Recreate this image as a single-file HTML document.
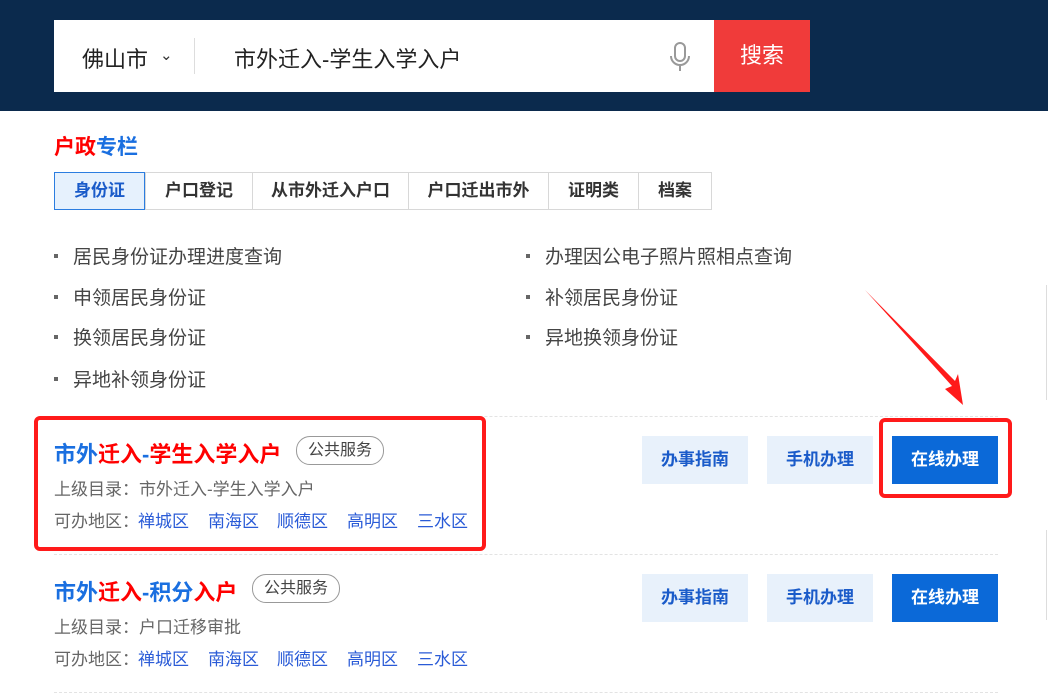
<!DOCTYPE html>
<html><head><meta charset="utf-8"><style>
*{margin:0;padding:0;box-sizing:border-box}
body{width:1048px;height:694px;overflow:hidden;background:#fff;font-family:"Liberation Sans","Noto Sans CJK SC",sans-serif;position:relative;color:#333}
.a{position:absolute;white-space:nowrap}
.hdr{left:0;top:0;width:1048px;height:111px;background:#0b2a4d}
.sb{left:54px;top:20px;width:660px;height:72px;background:#fff}
.btn{left:714px;top:20px;width:96px;height:72px;background:#f03b3a;color:#fff;font-size:22px;line-height:72px;text-align:center}
.tabs{left:54px;top:172px;height:38px;display:flex;border:1px solid #d8d8d8;border-left:none}
.tabs div{height:36px;line-height:36px;font-size:17px;font-weight:bold;text-align:center;border-left:1px solid #d8d8d8;color:#333}
.li{font-size:19px;color:#444}
.li:before{content:"";position:absolute;left:-19px;top:12px;width:4px;height:4px;background:#666}
.dash{left:54px;width:944px;border-top:1px dashed #e3e3e3;height:0}
.t{font-size:22px;font-weight:bold}
.tag{font-size:16px;border:1px solid #999;border-radius:14px;height:29px;line-height:27px;color:#444;width:88px;text-align:center}
.sm{font-size:17px;color:#666}
.d{font-size:17px;color:#2a5bd7}
.b{width:106px;height:48px;line-height:48px;text-align:center;font-size:17px;font-weight:bold;background:#e8f1fb;color:#1a5bc9}
.b.p{background:#0b69d8;color:#fff}
.rb{border:4px solid #ff1a1a;border-radius:6px}
</style></head><body>
<div class="a hdr"></div>
<div class="a sb"></div>
<div class="a" style="left:82px;top:42px;font-size:22px;color:#222">佛山市</div>
<div class="a" style="left:160px;top:46px;font-size:15px;color:#333">⌄</div>
<div class="a" style="left:194px;top:38px;width:1px;height:36px;background:#ddd"></div>
<div class="a" style="left:234px;top:42px;font-size:22px;color:#222">市外迁入-学生入学入户</div>
<svg class="a" style="left:668px;top:42px" width="24" height="30" viewBox="0 0 24 30"><rect x="7" y="1" width="10" height="18" rx="5" fill="none" stroke="#999" stroke-width="2"/><path d="M3 14a9 9 0 0 0 18 0M12 23v6" fill="none" stroke="#999" stroke-width="2"/></svg>
<div class="a btn">搜索</div>
<div class="a" style="left:54px;top:131px;font-size:21px;font-weight:bold"><span style="color:#f00">户政</span><span style="color:#1a6fe0">专栏</span></div>
<div class="a tabs">
<div style="width:91px;background:#e6f1fd;color:#1a5bc9;border:1px solid #2b7de0;height:38px;margin-top:-1px">身份证</div>
<div style="width:107px">户口登记</div><div style="width:156px">从市外迁入户口</div><div style="width:140px">户口迁出市外</div><div style="width:90px">证明类</div><div style="width:73px">档案</div></div>
<div class="a li" style="left:73px;top:242px">居民身份证办理进度查询</div>
<div class="a li" style="left:73px;top:283px">申领居民身份证</div>
<div class="a li" style="left:73px;top:323px">换领居民身份证</div>
<div class="a li" style="left:73px;top:365px">异地补领身份证</div>
<div class="a li" style="left:545px;top:242px">办理因公电子照片照相点查询</div>
<div class="a li" style="left:545px;top:283px">补领居民身份证</div>
<div class="a li" style="left:545px;top:323px">异地换领身份证</div>
<div class="a dash" style="top:416px"></div>
<div class="a dash" style="top:554px"></div>
<div class="a dash" style="top:692px"></div>

<div class="a t" style="left:54px;top:437px"><span style="color:#1a6fe0">市外</span><span style="color:#f00">迁入</span><span style="color:#1a6fe0">-</span><span style="color:#f00">学生入学入户</span></div>
<div class="a tag" style="left:296px;top:436px">公共服务</div>
<div class="a sm" style="left:54px;top:475px">上级目录：市外迁入-学生入学入户</div>
<div class="a sm" style="left:54px;top:507px">可办地区：</div>
<div class="a d" style="left:138px;top:507px">禅城区</div><div class="a d" style="left:208px;top:507px">南海区</div><div class="a d" style="left:277px;top:507px">顺德区</div><div class="a d" style="left:347px;top:507px">高明区</div><div class="a d" style="left:417px;top:507px">三水区</div>
<div class="a t" style="left:54px;top:575px"><span style="color:#1a6fe0">市外</span><span style="color:#f00">迁入</span><span style="color:#1a6fe0">-积分</span><span style="color:#f00">入户</span></div>
<div class="a tag" style="left:252px;top:574px">公共服务</div>
<div class="a sm" style="left:54px;top:613px">上级目录：户口迁移审批</div>
<div class="a sm" style="left:54px;top:645px">可办地区：</div>
<div class="a d" style="left:138px;top:645px">禅城区</div><div class="a d" style="left:208px;top:645px">南海区</div><div class="a d" style="left:277px;top:645px">顺德区</div><div class="a d" style="left:347px;top:645px">高明区</div><div class="a d" style="left:417px;top:645px">三水区</div>

<div class="a b" style="left:642px;top:436px">办事指南</div>
<div class="a b" style="left:767px;top:436px">手机办理</div>
<div class="a b p" style="left:892px;top:436px">在线办理</div>
<div class="a b" style="left:642px;top:574px">办事指南</div>
<div class="a b" style="left:767px;top:574px">手机办理</div>
<div class="a b p" style="left:892px;top:574px">在线办理</div>

<div class="a rb" style="left:34px;top:416px;width:452px;height:135px"></div>
<div class="a rb" style="left:879px;top:418px;width:133px;height:80px"></div>
<svg class="a" style="left:860px;top:285px" width="110" height="130"><path d="M5 5 L92 101 L85 104 L103 120 L98 89 L95 96 Z" fill="#ff1a1a"/></svg>
<div class="a" style="left:1046px;top:285px;width:1px;height:115px;background:#ddd"></div>
<div class="a" style="left:1046px;top:530px;width:1px;height:90px;background:#ddd"></div>
</body></html>
